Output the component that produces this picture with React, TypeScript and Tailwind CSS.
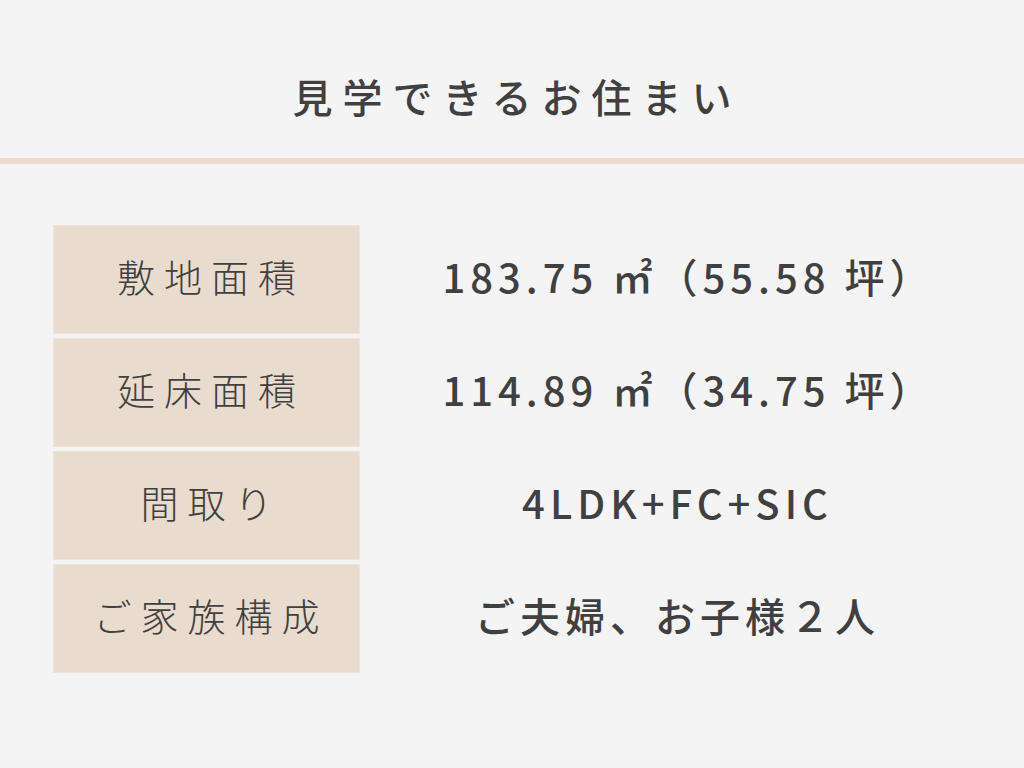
import React from "react";

const rows = [
  { label: "敷地面積", value: "183.75 ㎡（55.58 坪）", shift: true },
  { label: "延床面積", value: "114.89 ㎡（34.75 坪）", shift: true },
  { label: "間取り", value: "4LDK+FC+SIC", shift: false },
  { label: "ご家族構成", value: "ご夫婦、お子様２人", shift: false },
];

export default function App() {
  return (
    <div
      className="w-[1024px] h-[768px] bg-[#f4f4f4] text-[#404040] overflow-hidden"
      style={{ fontFamily: '"Noto Sans CJK JP", "Noto Sans", sans-serif' }}
    >
      <div className="h-[158px] flex items-center justify-center pt-[34px]">
        <h1 className="text-[40px] font-medium tracking-[10px] leading-none pl-[10px]">
          見学できるお住まい
        </h1>
      </div>
      <div className="h-[6px] bg-[#eadbcd]" />
      <div className="pt-[61px] pl-[53px]">
        <div className="flex flex-col gap-[4px]">
          {rows.map((r) => (
            <div key={r.label} className="flex h-[109px]">
              <div className="w-[307px] bg-[#e9dbcd] border border-[#f0e4d9] flex items-center justify-center pb-[8px]">
                <span className="text-[38px] font-light tracking-[9px] pl-[9px] leading-none">
                  {r.label}
                </span>
              </div>
              <div
                className={
                  r.shift
                    ? "w-[630px] flex items-center justify-center pb-[8px] pl-[22px]"
                    : "w-[630px] flex items-center justify-center pb-[8px]"
                }
              >
                <span className="text-[40px] font-medium tracking-[5px] pl-[5px] leading-none">
                  {r.value}
                </span>
              </div>
            </div>
          ))}
        </div>
      </div>
    </div>
  );
}
